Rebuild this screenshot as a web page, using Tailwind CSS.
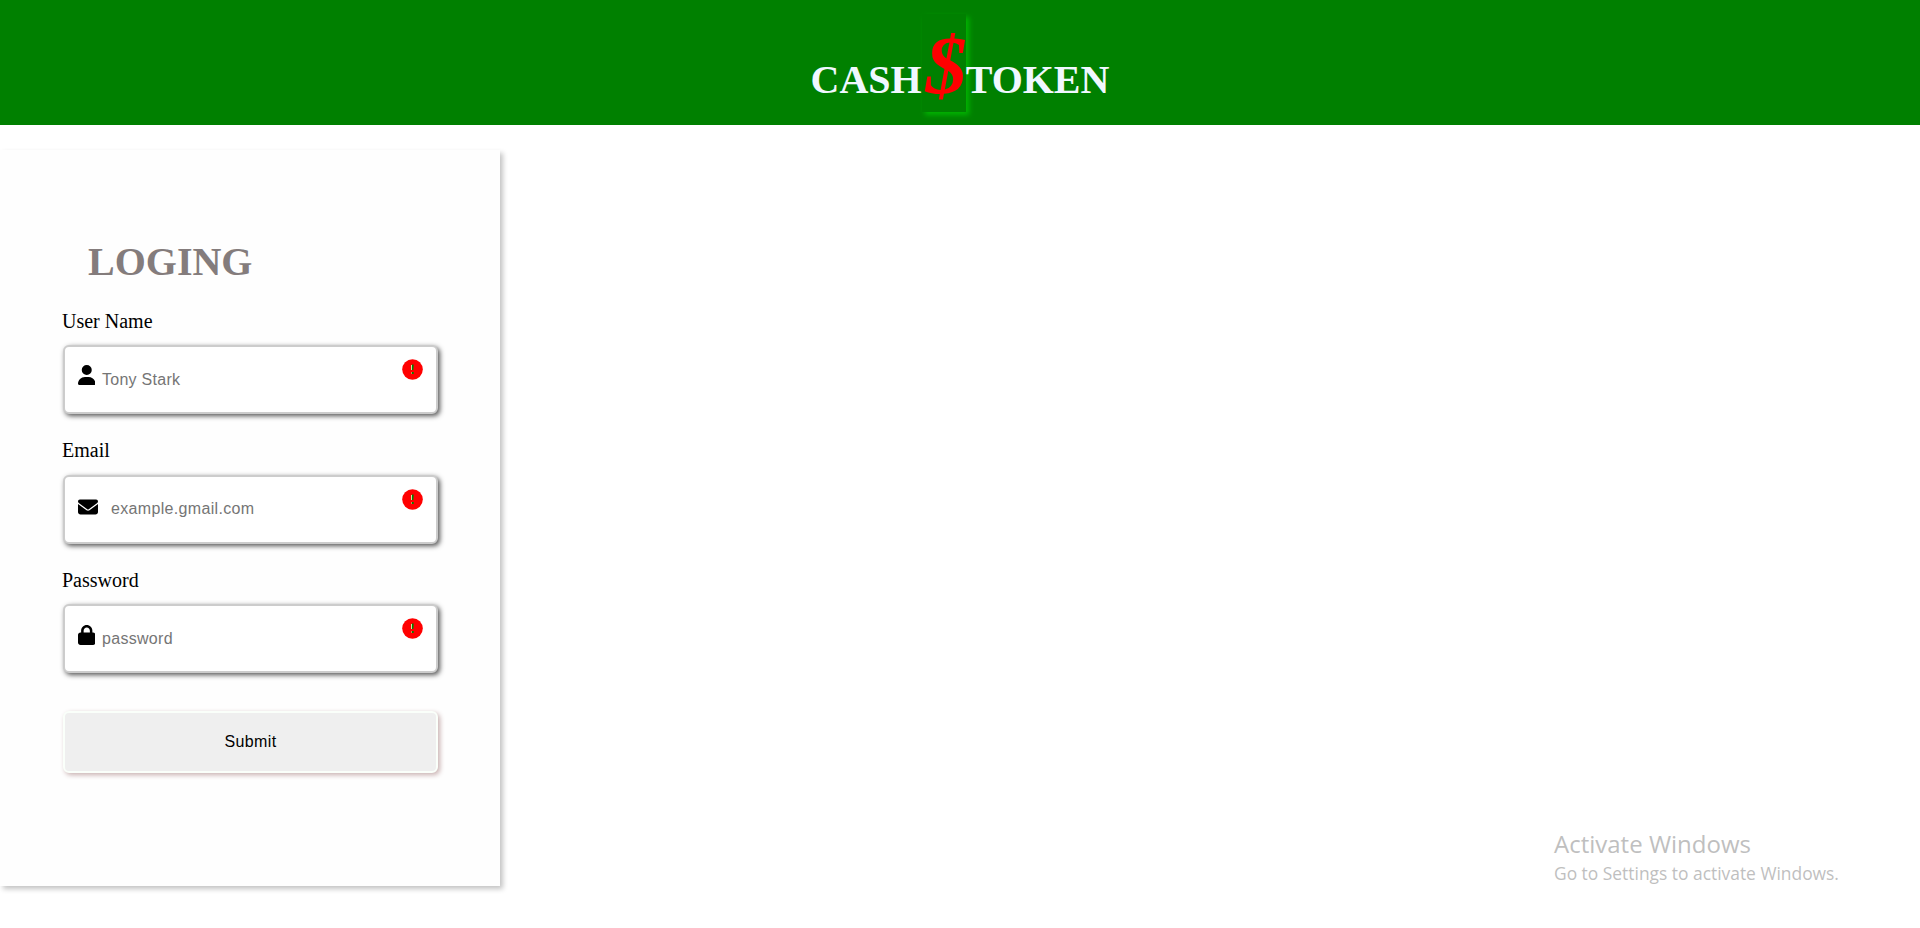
<!DOCTYPE html>
<html lang="en">
<head>
<meta charset="utf-8">
<title>Cash Token</title>
<script src="https://cdn.jsdelivr.net/npm/@tailwindcss/browser@4"></script>
</head>
<body class="h-[928px] overflow-hidden bg-white font-['Liberation_Serif',serif] text-black">
<header class="flex h-[125px] items-start justify-center bg-[#008000] pt-[14px] text-[40px] font-bold leading-[41px] text-[#f0f8ff]">
  <span class="mt-[45px]">CASH</span><i class="h-[98px] w-[44px] pl-[4px] text-[82px] leading-[104px] text-[#ff0000] shadow-[3px_3px_5px_#00b400]">$</i><span class="mt-[45px]">TOKEN</span>
</header>
<main class="mt-[25px] h-[736px] w-[500px] bg-[#fefefe] px-[63px] pt-[89px] shadow-[3px_3px_5px_#c4c4c4]">
  <h1 class="pl-[25px] text-[40px] font-bold leading-[46px] text-[#847c7c]">LOGING</h1>
  <form class="text-[20px] leading-[23px]">
    <label class="-ml-px mt-[25px] block">User Name</label>
    <div class="mt-[12px] flex h-[69px] w-[375px] rounded-[6px] border-2 border-[#ccc] bg-white pl-[12.5px] pr-[13px] shadow-[2px_2px_5px_#555]">
      <svg class="mt-[18px] h-5 w-[17.5px] shrink-0" viewBox="0 0 448 512"><path d="M224 256a128 128 0 1 0 0-256 128 128 0 1 0 0 256zm-45.700 48C79.800 304 0 383.800 0 482.300 0 498.700 13.300 512 29.700 512H418.300c16.400 0 29.700-13.300 29.700-29.700 0-98.500-79.800-178.300-178.300-178.300H178.300z"/></svg>
      <span class="ml-[7px] mt-[21px] flex-1 font-['Liberation_Sans',sans-serif] text-[16px] tracking-[0.27px] text-[#757575]">Tony Stark</span>
      <svg class="mt-[12px] h-[21px] w-[21px]" viewBox="0 0 21 21"><circle cx="10.500" cy="10.500" r="10.300" fill="red"/><path d="M9 6h1v5H9zM9.500 13h1v2h-1z" fill="#d4e8a0"/><path d="M10 5.500h1.700l-.3 5.500H10zM10 13h1.700v2H10z" fill="green"/></svg>
    </div>
    <label class="-ml-px mt-[25px] block">Email</label>
    <div class="mt-[13px] flex h-[69px] w-[375px] rounded-[6px] border-2 border-[#ccc] bg-white pl-[12.5px] pr-[13px] shadow-[2px_2px_5px_#555]">
      <svg class="mt-[20px] h-5 w-5 shrink-0" viewBox="0 0 512 512"><path d="M48 64C21.500 64 0 85.500 0 112c0 15.100 7.100 29.300 19.200 38.400L236.800 313.600c11.400 8.500 27 8.500 38.400 0L492.800 150.400c12.100-9.100 19.200-23.300 19.200-38.400 0-26.500-21.500-48-48-48H48zM0 176V384c0 35.300 28.700 64 64 64H448c35.300 0 64-28.700 64-64V176L294.400 339.200c-22.800 17.100-54 17.100-76.800 0L0 176z"/></svg>
      <span class="ml-[13.5px] mt-[20px] flex-1 font-['Liberation_Sans',sans-serif] text-[16px] tracking-[0.33px] text-[#757575]">example.gmail.com</span>
      <svg class="mt-[12px] h-[21px] w-[21px]" viewBox="0 0 21 21"><circle cx="10.500" cy="10.500" r="10.300" fill="red"/><path d="M9 6h1v5H9zM9.500 13h1v2h-1z" fill="#d4e8a0"/><path d="M10 5.500h1.700l-.3 5.500H10zM10 13h1.700v2H10z" fill="green"/></svg>
    </div>
    <label class="-ml-px mt-[25px] block">Password</label>
    <div class="mt-[12px] flex h-[69px] w-[375px] rounded-[6px] border-2 border-[#ccc] bg-white pl-[12.5px] pr-[13px] shadow-[2px_2px_5px_#555]">
      <svg class="mt-[18.500px] h-5 w-[17.5px] shrink-0" viewBox="0 0 448 512"><path d="M144 144v48H304V144c0-44.200-35.800-80-80-80s-80 35.800-80 80zM80 192V144C80 64.500 144.500 0 224 0s144 64.500 144 144v48h16c35.300 0 64 28.700 64 64V448c0 35.300-28.700 64-64 64H64c-35.300 0-64-28.700-64-64V256c0-35.300 28.700-64 64-64H80z"/></svg>
      <span class="ml-[7px] mt-[21px] flex-1 font-['Liberation_Sans',sans-serif] text-[16px] tracking-[0.3px] text-[#757575]">password</span>
      <svg class="mt-[12px] h-[21px] w-[21px]" viewBox="0 0 21 21"><circle cx="10.500" cy="10.500" r="10.300" fill="red"/><path d="M9 6h1v5H9zM9.500 13h1v2h-1z" fill="#d4e8a0"/><path d="M10 5.500h1.700l-.3 5.500H10zM10 13h1.700v2H10z" fill="green"/></svg>
    </div>
    <button type="button" class="mt-[38px] block h-[62px] w-[375px] rounded-[6px] border-2 border-[#fafffa] bg-[#efefef] font-['Liberation_Sans',sans-serif] text-[16px] leading-[18px] tracking-[0.35px] shadow-[2px_2px_5px_#c8b0b0]">Submit</button>
  </form>
</main>
<aside class="absolute left-[1554px] top-[827px] whitespace-nowrap font-['Open_Sans',sans-serif] text-[#bfbfbf]">
  <p class="text-[24px] leading-[34px]">Activate Windows</p>
  <p class="text-[17.4px] leading-[24px]">Go to Settings to activate Windows.</p>
</aside>
</body>
</html>
